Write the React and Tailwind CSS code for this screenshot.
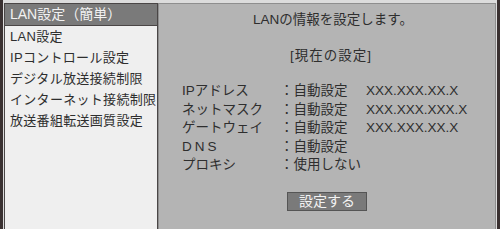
import React from "react";

const menuItems = [
  "LAN設定",
  "IPコントロール設定",
  "デジタル放送接続制限",
  "インターネット接続制限",
  "放送番組転送画質設定",
];

const rows = [
  { label: "IPアドレス", mode: "自動設定", value: "XXX.XXX.XX.X" },
  { label: "ネットマスク", mode: "自動設定", value: "XXX.XXX.XXX.X" },
  { label: "ゲートウェイ", mode: "自動設定", value: "XXX.XXX.XX.X" },
  { label: "DNS", mode: "自動設定", value: "", spaced: true },
  { label: "プロキシ", mode: "使用しない", value: "" },
];

function SideMenu() {
  return (
    <div className="w-[154px] shrink-0 flex flex-col bg-[#efefef] border-l border-t border-r border-[#4a4646]">
      <div className="h-[21px] box-content bg-[#7a7a7a] border-b border-[#4a4646] pl-[5px] text-[14px] leading-[21px] text-[#f2f2f2]">
        LAN設定（簡単）
      </div>
      <ul className="pl-[5px] text-[13px] leading-[21px] tracking-[0.3px] text-[#2e2e2e]">
        {menuItems.map((item) => (
          <li key={item} className="whitespace-nowrap">
            {item}
          </li>
        ))}
      </ul>
    </div>
  );
}

function SettingsPanel() {
  return (
    <div className="flex-1 flex flex-col items-center bg-[#b4b4b4] border-l border-t border-r border-[#8e8e8e] text-[#2e2e2e]">
      <p className="mt-[7px] pl-[12px] text-[13.5px] leading-[18px]">
        LANの情報を設定します。
      </p>
      <p className="mt-[18px] pl-[8px] text-[13.5px] leading-[18px] tracking-[1px]">
        [現在の設定]
      </p>
      <div className="self-start mt-[17px] ml-[23px] grid grid-cols-[98px_86px_auto] text-[13.5px] leading-[18.5px]">
        {rows.map((row) => (
          <React.Fragment key={row.label}>
            <span className={row.spaced ? "tracking-[3px]" : ""}>{row.label}</span>
            <span className="whitespace-nowrap">：{row.mode}</span>
            <span className="whitespace-nowrap">{row.value}</span>
          </React.Fragment>
        ))}
      </div>
      <button className="mt-[17px] w-[80px] h-[19px] bg-[#7a7a7a] border border-[#555555] text-[14px] leading-[17px] text-[#f2f2f2]">
        設定する
      </button>
    </div>
  );
}

export default function App() {
  return (
    <div className="w-[500px] h-[229px] overflow-hidden flex bg-[#dcdcdc] border-x-[3px] border-[#3a3131] pt-[3px] px-px font-['Liberation_Sans','Noto_Sans_CJK_JP',sans-serif]">
      <SideMenu />
      <SettingsPanel />
    </div>
  );
}
